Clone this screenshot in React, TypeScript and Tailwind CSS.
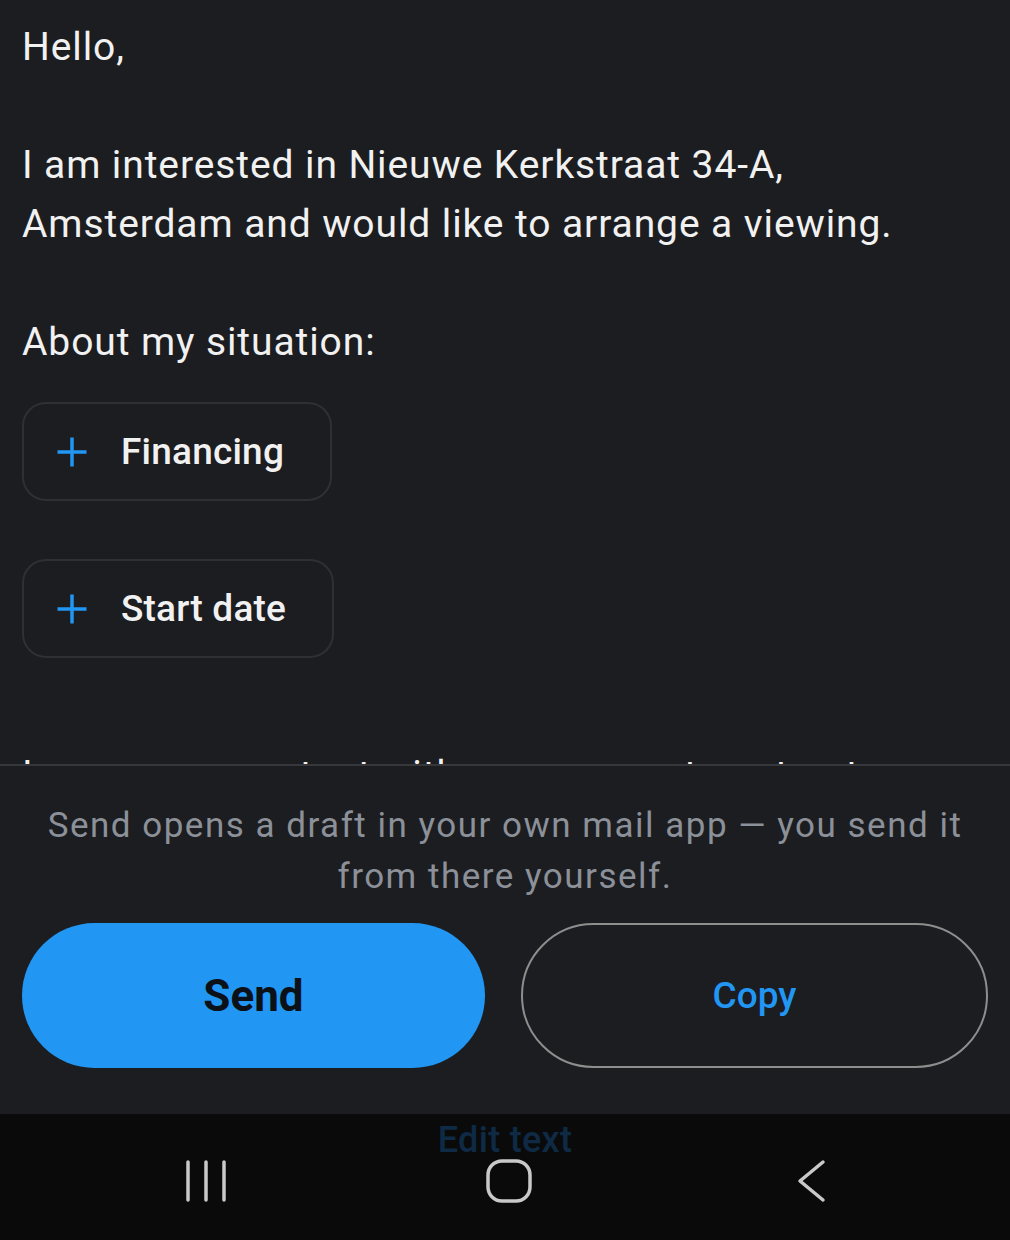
import React from 'react';

function PlusIcon() {
  return (
    <svg width="30" height="30" viewBox="0 0 30 30" fill="none">
      <path d="M15 0.5V29.5M0.5 15H29.5" stroke="#2196f3" strokeWidth="3.5" />
    </svg>
  );
}

function Chip({ label }: { label: string }) {
  return (
    <div className="inline-flex items-center h-[99px] rounded-[24px] border-2 border-[#2e3034] pl-[33px] pr-[46px] gap-[34px]">
      <PlusIcon />
      <span className="text-[37px] font-medium text-[#f1f1f1] tracking-[0.2px]">{label}</span>
    </div>
  );
}

function NavBar() {
  return (
    <div className="flex-1 bg-[#0a0a0a] flex flex-col items-center pt-[8px]">
      <div className="text-[36px] leading-[36px] font-medium text-[#0e2a45] tracking-[0.3px]">Edit text</div>
      <div className="flex justify-center pl-[8px]">
        <div className="w-[302px] flex justify-center">
          <svg width="46" height="46" viewBox="0 0 46 46" fill="none" stroke="#c9c9c9" strokeWidth="3.5" strokeLinecap="round">
            <path d="M4 4V42M22 4V42M40 4V42" />
          </svg>
        </div>
        <div className="w-[302px] flex justify-center">
          <svg width="46" height="46" viewBox="0 0 46 46" fill="none">
            <rect x="2" y="3" width="42" height="40" rx="14" stroke="#c9c9c9" strokeWidth="3.5" />
          </svg>
        </div>
        <div className="w-[302px] flex justify-center">
          <svg width="46" height="46" viewBox="0 0 46 46" fill="none" stroke="#c9c9c9" strokeWidth="3.5" strokeLinecap="round" strokeLinejoin="round">
            <path d="M35 4L12 23L35 42" />
          </svg>
        </div>
      </div>
    </div>
  );
}

export default function App() {
  return (
    <div className="w-[1010px] h-[1240px] flex flex-col bg-[#1c1d20] font-['Roboto',sans-serif]">
      <div className="h-[764px] shrink-0 overflow-hidden px-[22px] pt-[18px] text-[39px] leading-[59px] text-[#f1f1f1] tracking-[0.9px]">
        <p className="mb-[59px]">Hello,</p>
        <p className="mb-[59px]">
          I am interested in Nieuwe Kerkstraat 34-A,
          <br />
          Amsterdam and would like to arrange a viewing.
        </p>
        <p>About my situation:</p>
        <div className="mt-[30px] flex flex-col items-start gap-[58px]">
          <Chip label="Financing" />
          <Chip label="Start date" />
        </div>
        <p className="mt-[88px]">I am an accountant with a permanent contract.</p>
      </div>
      <div className="border-t-2 border-[#35373b] flex flex-col items-center pt-[34px] pb-[46px] px-[22px]">
        <p className="text-[35px] leading-[51px] text-[#8b9099] text-center tracking-[1.5px] px-[18px]">
          Send opens a draft in your own mail app — you send it from there yourself.
        </p>
        <div className="mt-[21px] w-full flex gap-[36px]">
          <button className="flex-1 h-[145px] rounded-full bg-[#2196f3] text-[44px] font-bold text-[#0b1117]">
            Send
          </button>
          <button className="flex-1 h-[145px] rounded-full border-2 border-[#8e8e8e] text-[37px] font-medium text-[#2196f3]">
            Copy
          </button>
        </div>
      </div>
      <NavBar />
    </div>
  );
}
